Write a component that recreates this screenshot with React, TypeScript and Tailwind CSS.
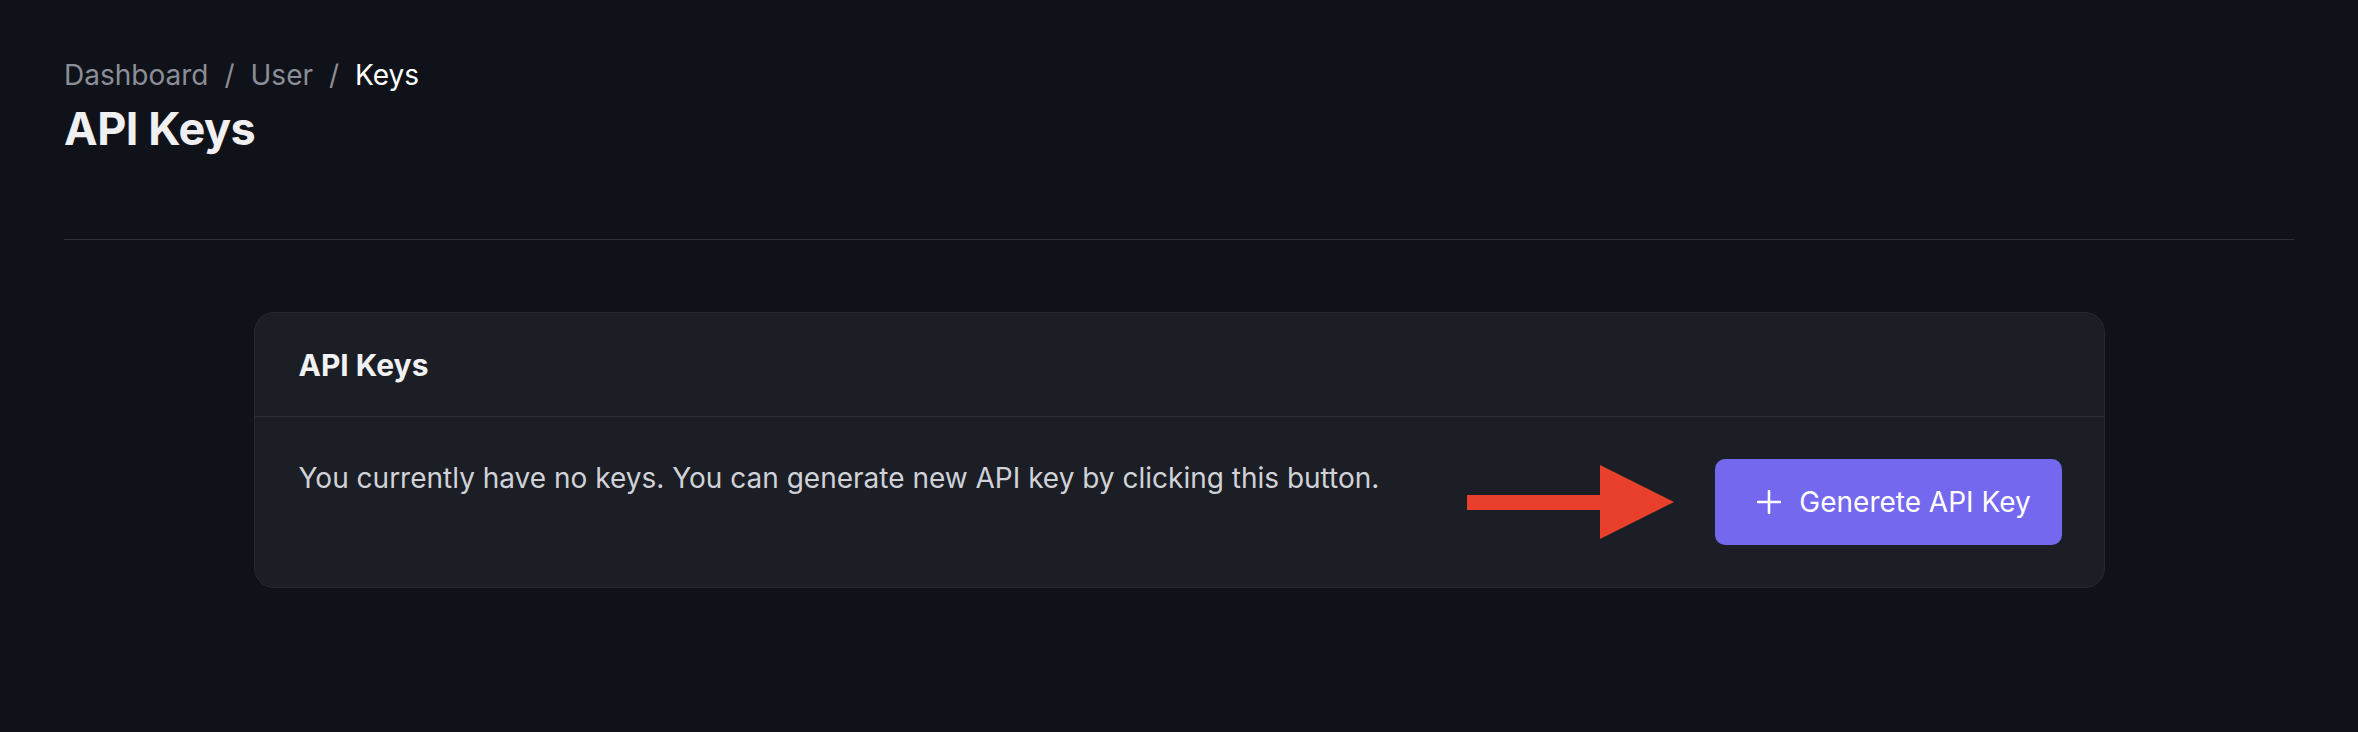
const font = "font-['Inter','Noto_Sans',sans-serif]";

function Breadcrumb() {
    return (
        <nav className="flex items-center gap-[16px] text-[28px] leading-[36px] text-[#8b8e96]">
            <span>Dashboard</span>
            <span>/</span>
            <span>User</span>
            <span>/</span>
            <span className="text-white">Keys</span>
        </nav>
    );
}

function Arrow() {
    return (
        <svg width="207" height="74" viewBox="0 0 207 74" className="shrink-0">
            <rect x="0" y="30" width="136" height="15" fill="#e8402a" />
            <polygon points="133,0 207,37 133,74" fill="#e8402a" />
        </svg>
    );
}

function PlusIcon() {
    return (
        <svg width="24" height="24" viewBox="0 0 24 24" className="shrink-0">
            <path d="M12 1v22M1 12h22" stroke="currentColor" strokeWidth="2.6" strokeLinecap="round" />
        </svg>
    );
}

export default function App() {
    return (
        <div className={`${font} min-h-[732px] bg-[#0f1219] px-[64px] pt-[57px]`}>

            {/* Header */}

            <Breadcrumb />

            <h1 className="mt-[9px] text-[45px] leading-[54px] font-bold tracking-[-0.01em] text-[#f0f0f2]">
                API Keys
            </h1>

            <div className="mt-[83px] h-px bg-[#2d3036]" />

            {/* Card */}

            <section className="mx-auto mt-[72px] w-[1851px] rounded-[20px] border border-[#262930] bg-[#1b1e25]">

                <div className="border-b border-[#2c2f34] px-[44px] pt-[30px] pb-[28px]">
                    <h2 className="text-[30px] leading-[45px] font-bold text-[#f2f2f4]">
                        API Keys
                    </h2>
                </div>

                <div className="flex items-start justify-between pl-[44px] pr-[42px] pt-[42px] pb-[42px]">

                    <p className="pt-[1px] text-[28px] leading-[36px] text-[#d0d2d7]">
                        You currently have no keys. You can generate new API key by clicking this button.
                    </p>

                    <div className="flex items-center gap-[41px]">
                        <Arrow />
                        <button className="flex h-[86px] w-[347px] items-center justify-center gap-[18px] rounded-[10px] bg-[#7468ee] pl-[12px] text-[28px] text-white">
                            <PlusIcon />
                            <span>Generete API Key</span>
                        </button>
                    </div>

                </div>

            </section>

        </div>
    );
}
